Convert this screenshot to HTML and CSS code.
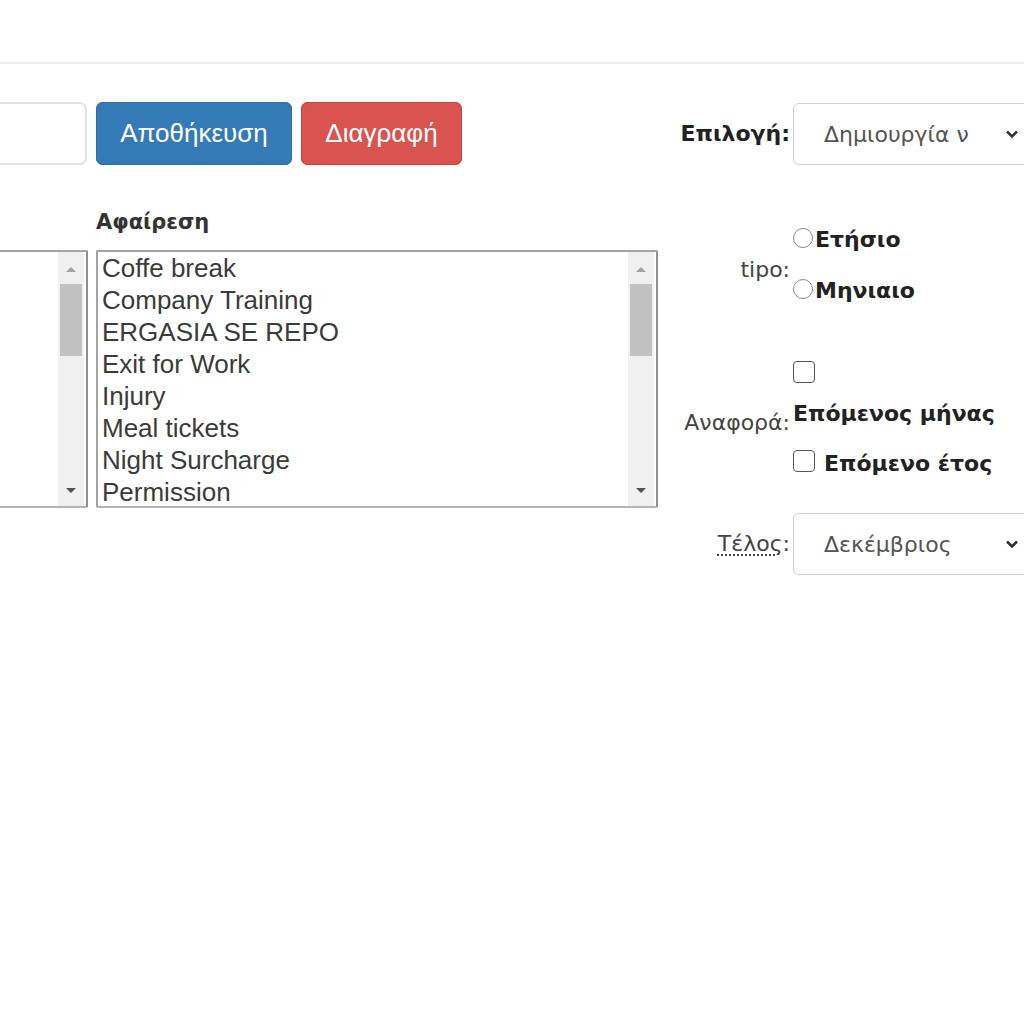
FILE: index.html
```html
<!DOCTYPE html>
<html lang="el">
<head>
  <meta charset="UTF-8" />
  <meta name="viewport" content="width=device-width, initial-scale=1.0"/>
  <title>Ρυθμίσεις αναφοράς</title>
  <link rel="stylesheet" href="styles.css">
</head>
<body>
  <!-- Top bar -->
  <header class="topbar"></header>

  <main class="page">
    <!-- Left side: name, buttons, lists -->
    <section class="editor">
      <div class="cell"><div class="text-input"></div></div>
      <div class="cell actions">
        <button class="btn btn-save">Αποθήκευση</button>
        <button class="btn btn-delete">Διαγραφή</button>
      </div>

      <div class="cell"></div>
      <div class="cell"><h3 class="list-title">Αφαίρεση</h3></div>

      <div class="cell">
        <div class="listbox">
          <div class="list-items"></div>
          <div class="scrollbar">
            <span class="arrow up"></span>
            <span class="thumb"></span>
            <span class="arrow down"></span>
          </div>
        </div>
      </div>
      <div class="cell">
        <div class="listbox">
          <div class="list-items">
            <div>Coffe break</div>
            <div>Company Training</div>
            <div>ERGASIA SE REPO</div>
            <div>Exit for Work</div>
            <div>Injury</div>
            <div>Meal tickets</div>
            <div>Night Surcharge</div>
            <div>Permission</div>
          </div>
          <div class="scrollbar">
            <span class="arrow up"></span>
            <span class="thumb"></span>
            <span class="arrow down"></span>
          </div>
        </div>
      </div>
    </section>

    <!-- Right side: options form -->
    <section class="options">
      <div class="opt-row row-choice">
        <label class="opt-label strong">Επιλογή:</label>
        <div class="select">
          <span>Δημιουργία ν</span>
          <svg width="14" height="10" viewBox="0 0 14 10"><path d="M2 2.5 L7 7.5 L12 2.5" fill="none" stroke="#333" stroke-width="2.6"/></svg>
        </div>
      </div>

      <div class="opt-row row-type">
        <label class="opt-label">tipo:</label>
        <div class="choices">
          <div class="radio-line"><span class="radio"></span><b>Ετήσιο</b></div>
          <div class="radio-line"><span class="radio"></span><b>Μηνιαιο</b></div>
        </div>
      </div>

      <div class="opt-row row-report">
        <label class="opt-label">Αναφορά:</label>
        <div class="choices">
          <div class="check-line"><span class="check"></span></div>
          <div class="check-text"><b>Επόμενος μήνας</b></div>
          <div class="check-line"><span class="check"></span><b>Επόμενο έτος</b></div>
        </div>
      </div>

      <div class="opt-row row-end">
        <label class="opt-label"><abbr title="Τέλος">Τέλος</abbr>:</label>
        <div class="select">
          <span>Δεκέμβριος</span>
          <svg width="14" height="10" viewBox="0 0 14 10"><path d="M2 2.5 L7 7.5 L12 2.5" fill="none" stroke="#333" stroke-width="2.6"/></svg>
        </div>
      </div>
    </section>
  </main>
</body>
</html>
```

FILE: styles.css
```css
body {
  margin: 0;
  font-family: "Liberation Sans", Arial, sans-serif;
  color: #333;
  background: #fff;
  overflow: hidden;
}

/* Top bar */
.topbar {
  height: 62px;
  border-bottom: 2px solid #ececec;
}

.page {
  display: flex;
  margin-left: -220px;
  padding-top: 38px;
}

/* Editor (left) */
.editor {
  display: grid;
  grid-template-columns: 308px 562px;
  column-gap: 8px;
  align-content: start;
}

.text-input {
  height: 59px;
  margin-right: 1px;
  border: 2px solid #e2e2e2;
  border-radius: 7px;
}

.actions {
  display: flex;
  gap: 9px;
}

.btn {
  height: 63px;
  border: none;
  border-radius: 7px;
  color: #fff;
  font-family: "Liberation Sans", Arial, sans-serif;
  font-size: 26px;
  padding: 0;
  cursor: pointer;
}

.btn-save {
  width: 196px;
  background: #337ab7;
  box-shadow: inset 0 0 0 1px #2e6da4;
}

.btn-delete {
  width: 161px;
  background: #d9534f;
  box-shadow: inset 0 0 0 1px #d43f3a;
}

.list-title {
  margin: 42px 0 13px;
  font-family: "DejaVu Sans", sans-serif;
  font-size: 21px;
  line-height: 30px;
  font-weight: bold;
  color: #333;
}

.listbox {
  display: flex;
  height: 254px;
  border: 2px solid #a3a3a3;
  border-right-color: #8f8f8f;
  border-bottom-color: #b5b5b5;
  border-radius: 2px;
  background: #fff;
}

.list-items {
  flex: 1;
  padding-left: 4px;
  font-size: 26px;
  line-height: 32px;
  color: #3b3b3b;
  overflow: hidden;
}

.scrollbar {
  width: 26px;
  margin-right: 2px;
  background: #f0f0f0;
  display: flex;
  flex-direction: column;
  align-items: center;
}

.thumb {
  width: 22px;
  height: 72px;
  background: #c1c1c1;
}

.arrow {
  width: 0;
  height: 0;
  border-left: 5px solid transparent;
  border-right: 5px solid transparent;
}

.arrow.up {
  margin: 15px 0 12px;
  border-bottom: 5px solid #a3a3a3;
}

.arrow.down {
  margin-top: auto;
  margin-bottom: 13px;
  border-top: 5px solid #505050;
}

/* Options (right) */
.options {
  margin-left: 20px;
  display: flex;
  flex-direction: column;
  font-family: "DejaVu Sans", sans-serif;
}

.opt-row {
  display: flex;
  align-items: center;
}

.opt-label {
  width: 112px;
  margin-right: 3px;
  text-align: right;
  font-size: 22px;
  color: #444;
  white-space: nowrap;
}

.opt-label.strong {
  font-weight: bold;
  color: #222;
}

abbr {
  text-decoration: underline dotted;
  text-underline-offset: 3px;
}

.select {
  width: 262px;
  height: 62px;
  box-sizing: border-box;
  margin-top: 1px;
  border: 1px solid #cfcfcf;
  border-radius: 6px;
  display: flex;
  align-items: center;
  padding-left: 30px;
  font-size: 22px;
  color: #555;
}

.select span {
  flex: 0 0 151px;
  margin-right: 30px;
  white-space: nowrap;
}

.row-type {
  margin-top: 49px;
}

.row-type .opt-label {
  padding-top: 8px;
}

.choices b {
  font-size: 22px;
  color: #222;
}

.radio-line {
  height: 51px;
  display: flex;
  align-items: center;
}

.radio {
  width: 20px;
  height: 20px;
  box-sizing: border-box;
  border: 1.5px solid #8a8a8a;
  border-radius: 50%;
  margin-top: -4px;
  margin-right: 2px;
}

.row-report {
  margin-top: 33px;
}

.row-report .opt-label {
  padding-top: 12px;
}

.check-line {
  display: flex;
  align-items: center;
  height: 46px;
}

.check-line b {
  padding-top: 4px;
}

.check-text {
  height: 43px;
  line-height: 38px;
}

.check {
  width: 22px;
  height: 22px;
  box-sizing: border-box;
  border: 1.5px solid #555;
  border-radius: 4px;
  margin-right: 9px;
}

.row-end {
  margin-top: 28px;
}
```
